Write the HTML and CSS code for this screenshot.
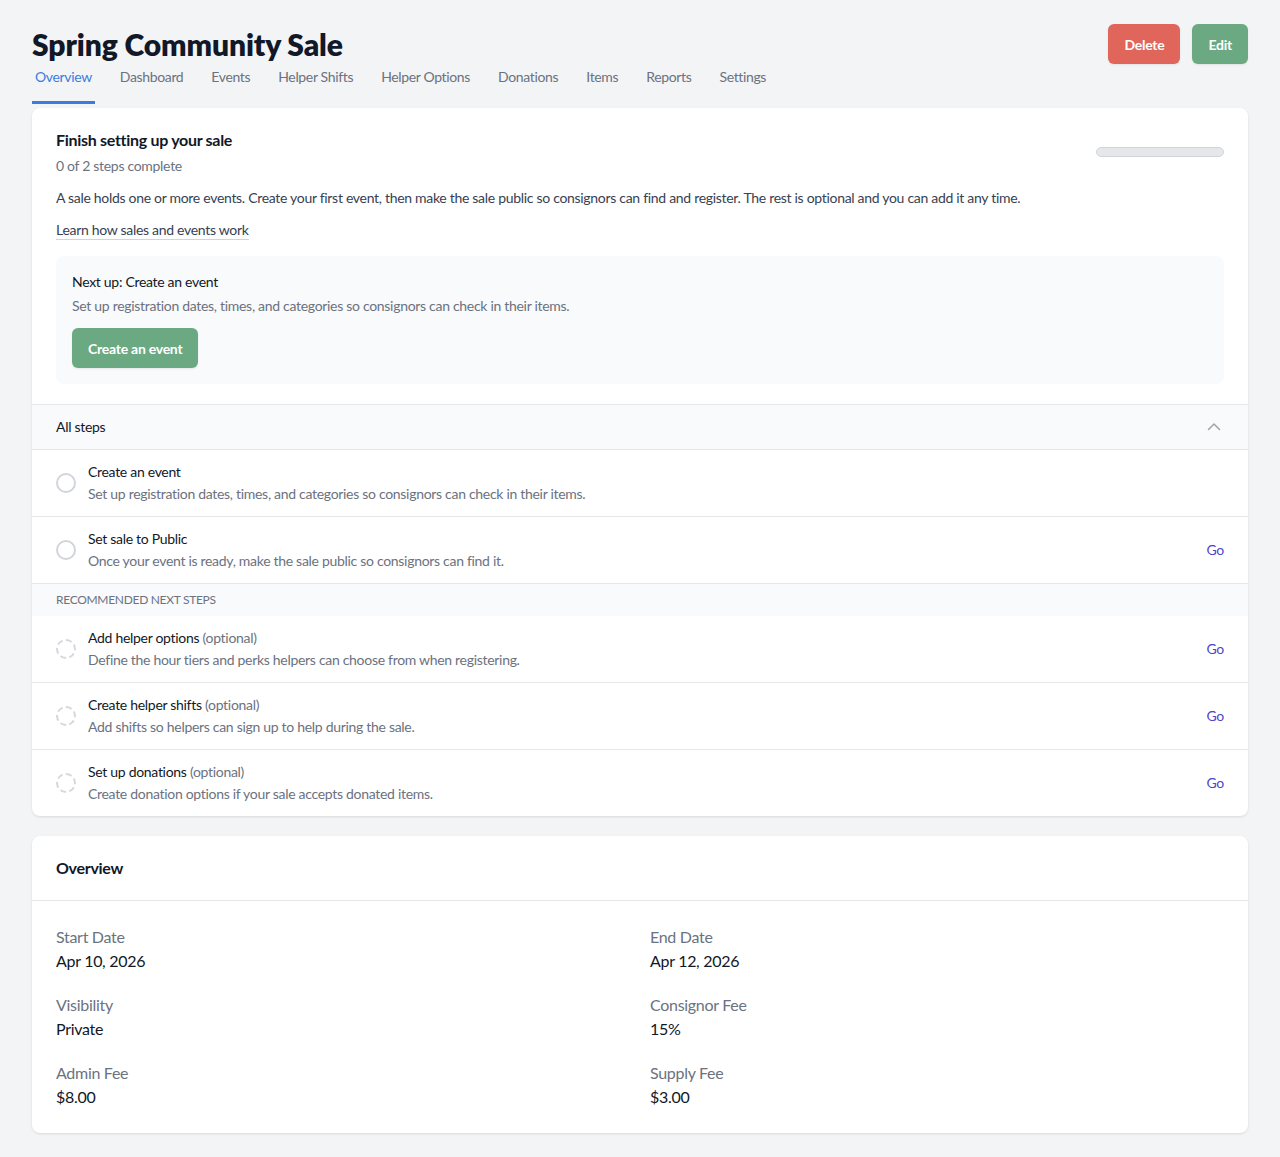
FILE: index.html
```html
<!DOCTYPE html>
<html lang="en">
<head>
    <meta charset="UTF-8">
    <meta name="viewport" content="width=device-width, initial-scale=1.0">
    <title>Spring Community Sale</title>
    <link rel="stylesheet" href="styles.css">
</head>
<body>

<header class="page-header">
    <div class="title-block">
        <h1>Spring Community Sale</h1>
        <nav class="tabs">
            <a class="tab active" href="#">Overview</a>
            <a class="tab" href="#">Dashboard</a>
            <a class="tab" href="#">Events</a>
            <a class="tab" href="#">Helper Shifts</a>
            <a class="tab" href="#">Helper Options</a>
            <a class="tab" href="#">Donations</a>
            <a class="tab" href="#">Items</a>
            <a class="tab" href="#">Reports</a>
            <a class="tab" href="#">Settings</a>
        </nav>
    </div>
    <div class="actions">
        <button class="btn btn-danger">Delete</button>
        <button class="btn btn-success">Edit</button>
    </div>
</header>

<main>
    <section class="card setup">
        <div class="setup-top">
            <div class="setup-head">
                <div>
                    <h2>Finish setting up your sale</h2>
                    <p class="muted count">0 of 2 steps complete</p>
                </div>
                <div class="progress"><div class="progress-fill" style="width: 0%"></div></div>
            </div>
            <p class="intro">A sale holds one or more events. Create your first event, then make the sale public so consignors can find and register. The rest is optional and you can add it any time.</p>
            <a class="learn" href="#">Learn how sales and events work</a>

            <div class="next-up">
                <p class="next-title">Next up: Create an event</p>
                <p class="muted">Set up registration dates, times, and categories so consignors can check in their items.</p>
                <button class="btn btn-success">Create an event</button>
            </div>
        </div>

        <div class="steps-toggle">
            <span>All steps</span>
            <svg width="16" height="16" viewBox="0 0 16 16" fill="none" stroke="#9ca3af" stroke-width="1.5" stroke-linecap="round" stroke-linejoin="round"><path d="M2.5 10.5 8 5l5.5 5.5"/></svg>
        </div>

        <ul class="steps">
            <li class="step">
                <span class="circle"></span>
                <div class="step-text">
                    <p class="step-title">Create an event</p>
                    <p class="muted">Set up registration dates, times, and categories so consignors can check in their items.</p>
                </div>
            </li>
            <li class="step">
                <span class="circle"></span>
                <div class="step-text">
                    <p class="step-title">Set sale to Public</p>
                    <p class="muted">Once your event is ready, make the sale public so consignors can find it.</p>
                </div>
                <a class="go" href="#">Go</a>
            </li>
            <li class="steps-label">Recommended next steps</li>
            <li class="step">
                <span class="circle dashed"></span>
                <div class="step-text">
                    <p class="step-title">Add helper options <span class="optional">(optional)</span></p>
                    <p class="muted">Define the hour tiers and perks helpers can choose from when registering.</p>
                </div>
                <a class="go" href="#">Go</a>
            </li>
            <li class="step">
                <span class="circle dashed"></span>
                <div class="step-text">
                    <p class="step-title">Create helper shifts <span class="optional">(optional)</span></p>
                    <p class="muted">Add shifts so helpers can sign up to help during the sale.</p>
                </div>
                <a class="go" href="#">Go</a>
            </li>
            <li class="step">
                <span class="circle dashed"></span>
                <div class="step-text">
                    <p class="step-title">Set up donations <span class="optional">(optional)</span></p>
                    <p class="muted">Create donation options if your sale accepts donated items.</p>
                </div>
                <a class="go" href="#">Go</a>
            </li>
        </ul>
    </section>

    <section class="card overview">
        <h2 class="card-title">Overview</h2>
        <dl class="details">
            <div><dt>Start Date</dt><dd>Apr 10, 2026</dd></div>
            <div><dt>End Date</dt><dd>Apr 12, 2026</dd></div>
            <div><dt>Visibility</dt><dd>Private</dd></div>
            <div><dt>Consignor Fee</dt><dd>15%</dd></div>
            <div><dt>Admin Fee</dt><dd>$8.00</dd></div>
            <div><dt>Supply Fee</dt><dd>$3.00</dd></div>
        </dl>
    </section>
</main>

</body>
</html>
```

FILE: styles.css
```css
/* Reset */
* {
    box-sizing: border-box;
    margin: 0;
    padding: 0;
}

body {
    font-family: Lato, "Noto Sans", sans-serif;
    font-size: 14px;
    line-height: 20px;
    letter-spacing: -0.3px;
    background-color: #f3f4f6;
    color: #111827;
    padding: 24px 32px 24px;
}

/* Header */
.page-header {
    display: flex;
    justify-content: space-between;
    align-items: flex-start;
}

h1 {
    font-size: 30px;
    line-height: 40px;
    font-weight: 800;
    color: #111827;
    letter-spacing: -0.1px;
}

.tabs {
    display: flex;
    gap: 22px;
}

.tab {
    display: block;
    padding: 3px 3px 14px;
    border-bottom: 3px solid transparent;
    color: #6b7280;
    text-decoration: none;
    letter-spacing: -0.35px;
}

.tab.active {
    color: #3b7ddd;
    border-bottom-color: #3b7ddd;
}

.actions {
    display: flex;
    gap: 12px;
}

.btn {
    font-family: inherit;
    font-size: 14px;
    font-weight: 700;
    letter-spacing: -0.25px;
    color: #fff;
    border: none;
    border-radius: 6px;
    height: 40px;
    padding: 0 16px;
    cursor: pointer;
    box-shadow: 0 1px 2px rgba(0,0,0,0.08);
}

.btn-danger {
    background-color: #e0655a;
}

.btn-success {
    background-color: #6aa982;
}

/* Cards */
main {
    margin-top: 4px;
    display: flex;
    flex-direction: column;
    gap: 20px;
}

.card {
    background-color: #fff;
    border-radius: 8px;
    box-shadow: 0 1px 3px rgba(0,0,0,0.08), 0 1px 2px rgba(0,0,0,0.04);
    overflow: hidden;
}

.muted {
    color: #6b7280;
}

/* Setup card */
.setup-top {
    padding: 20px 24px;
}

.setup-head {
    display: flex;
    justify-content: space-between;
    align-items: flex-start;
}

.setup-head h2 {
    font-size: 16px;
    line-height: 24px;
    font-weight: 700;
}

.count {
    margin-top: 4px;
}

.progress {
    width: 128px;
    height: 10px;
    margin-top: 19px;
    background-color: #e5e7eb;
    border: 1px solid #d1d5db;
    border-radius: 5px;
    overflow: hidden;
}

.progress-fill {
    height: 100%;
    background-color: #6aa982;
}

.intro {
    margin-top: 12px;
    color: #374151;
}

.learn {
    display: inline-block;
    margin-top: 12px;
    color: #374151;
    text-decoration: none;
    border-bottom: 1px solid #d1d5db;
    line-height: 19px;
}

.next-up {
    margin-top: 16px;
    background-color: #f9fafb;
    border-radius: 8px;
    padding: 16px;
}

.next-title {
    color: #111827;
}

.next-up .muted {
    margin-top: 4px;
}

.next-up .btn {
    margin-top: 12px;
}

/* Steps */
.steps-toggle {
    display: flex;
    justify-content: space-between;
    align-items: center;
    padding: 12px 26px 12px 24px;
    background-color: #f9fafb;
    border-top: 1px solid #e5e7eb;
    border-bottom: 1px solid #e5e7eb;
}

.steps {
    list-style: none;
}

.step {
    display: flex;
    align-items: center;
    gap: 12px;
    padding: 12px 24px;
    border-bottom: 1px solid #e5e7eb;
}

.step:last-child {
    border-bottom: none;
}

.circle {
    flex: none;
    width: 20px;
    height: 20px;
    border: 2px solid #d1d5db;
    border-radius: 50%;
}

.circle.dashed {
    border-style: dashed;
    border-color: #d4d7dc;
}

.step-text {
    flex: 1;
}

.step-text .muted {
    margin-top: 2px;
}

.optional {
    color: #6b7280;
}

.go {
    color: #4f46c8;
    text-decoration: none;
}

.steps-label {
    padding: 8px 24px;
    font-size: 12px;
    line-height: 16px;
    text-transform: uppercase;
    color: #6b7280;
    background-color: #f9fafb;
}

/* Overview card */
.card-title {
    font-size: 16px;
    line-height: 24px;
    font-weight: 700;
    padding: 20px 24px;
    border-bottom: 1px solid #e5e7eb;
}

.details {
    display: grid;
    grid-template-columns: 1fr 1fr;
    gap: 20px;
    padding: 24px;
}

.details dt {
    font-size: 16px;
    line-height: 24px;
    letter-spacing: -0.3px;
    color: #6b7280;
}

.details dd {
    font-size: 16px;
    line-height: 24px;
    letter-spacing: -0.3px;
    color: #111827;
}
```
